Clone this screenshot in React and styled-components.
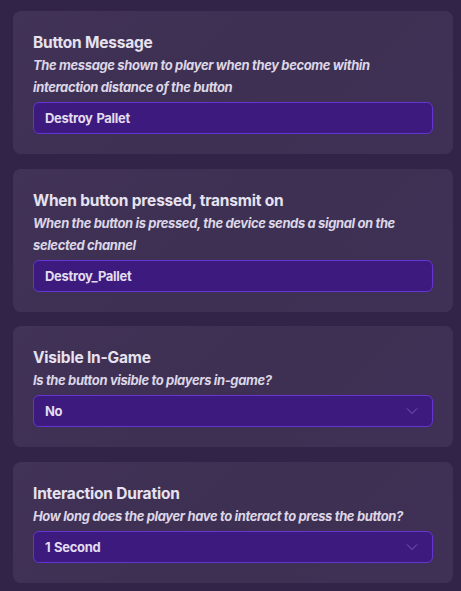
import React from "react";
import styled, { createGlobalStyle } from "styled-components";

const GlobalStyle = createGlobalStyle`
  html, body {
    margin: 0;
    padding: 0;
    background: #322348;
  }
  body {
    font-family: Inter, "Noto Sans", sans-serif;
    color: #e6e1ef;
  }
`;

const Page = styled.div`
  display: flex;
  flex-direction: column;
  gap: 14.6px;
  padding: 11px 8px 11px 13px;
  min-height: 591px;
  box-sizing: border-box;
`;

const Card = styled.div`
  display: flex;
  flex-direction: column;
  padding: 21px 20px 20px 20px;
  border-radius: 8px;
  background: linear-gradient(135deg, #413257 0%, #3d3052 50%, #3f3156 100%);
`;

const Title = styled.div`
  font-size: 15.5px;
  font-weight: 700;
  line-height: 22px;
  letter-spacing: -0.2px;
  color: #e7e2ef;
`;

const Desc = styled.div`
  font-size: 13px;
  font-style: italic;
  font-weight: 700;
  line-height: 22px;
  letter-spacing: -0.37px;
  color: #dcd6e6;
  margin-bottom: 4px;
`;

const Field = styled.div`
  display: flex;
  align-items: center;
  justify-content: space-between;
  height: 32px;
  box-sizing: border-box;
  padding: 0 14px 0 11px;
  border: 1px solid #6634d2;
  border-radius: 6px;
  background: #3d1a7e;
  font-size: 13px;
  font-weight: 700;
  letter-spacing: -0.3px;
  word-spacing: 1px;
  color: #e2dcef;
  cursor: ${({ $select }) => ($select ? "pointer" : "text")};
`;

const Chevron = () => (
  <svg width="12" height="8" viewBox="0 0 12 8" fill="none">
    <path d="M1 1.5 L6 6.5 L11 1.5" stroke="#7d62b5" strokeWidth="1" />
  </svg>
);

const settings = [
  {
    title: "Button Message",
    desc: "The message shown to player when they become within interaction distance of the button",
    value: "Destroy Pallet",
  },
  {
    title: "When button pressed, transmit on",
    desc: "When the button is pressed, the device sends a signal on the selected channel",
    value: "Destroy_Pallet",
  },
  {
    title: "Visible In-Game",
    desc: "Is the button visible to players in-game?",
    value: "No",
    select: true,
  },
  {
    title: "Interaction Duration",
    desc: "How long does the player have to interact to press the button?",
    value: "1 Second",
    select: true,
  },
];

export default function App() {
  return (
    <>
      <GlobalStyle />
      <Page>
        {settings.map((s) => (
          <Card key={s.title}>
            <Title>{s.title}</Title>
            <Desc>{s.desc}</Desc>
            <Field $select={s.select}>
              <span>{s.value}</span>
              {s.select && <Chevron />}
            </Field>
          </Card>
        ))}
      </Page>
    </>
  );
}
